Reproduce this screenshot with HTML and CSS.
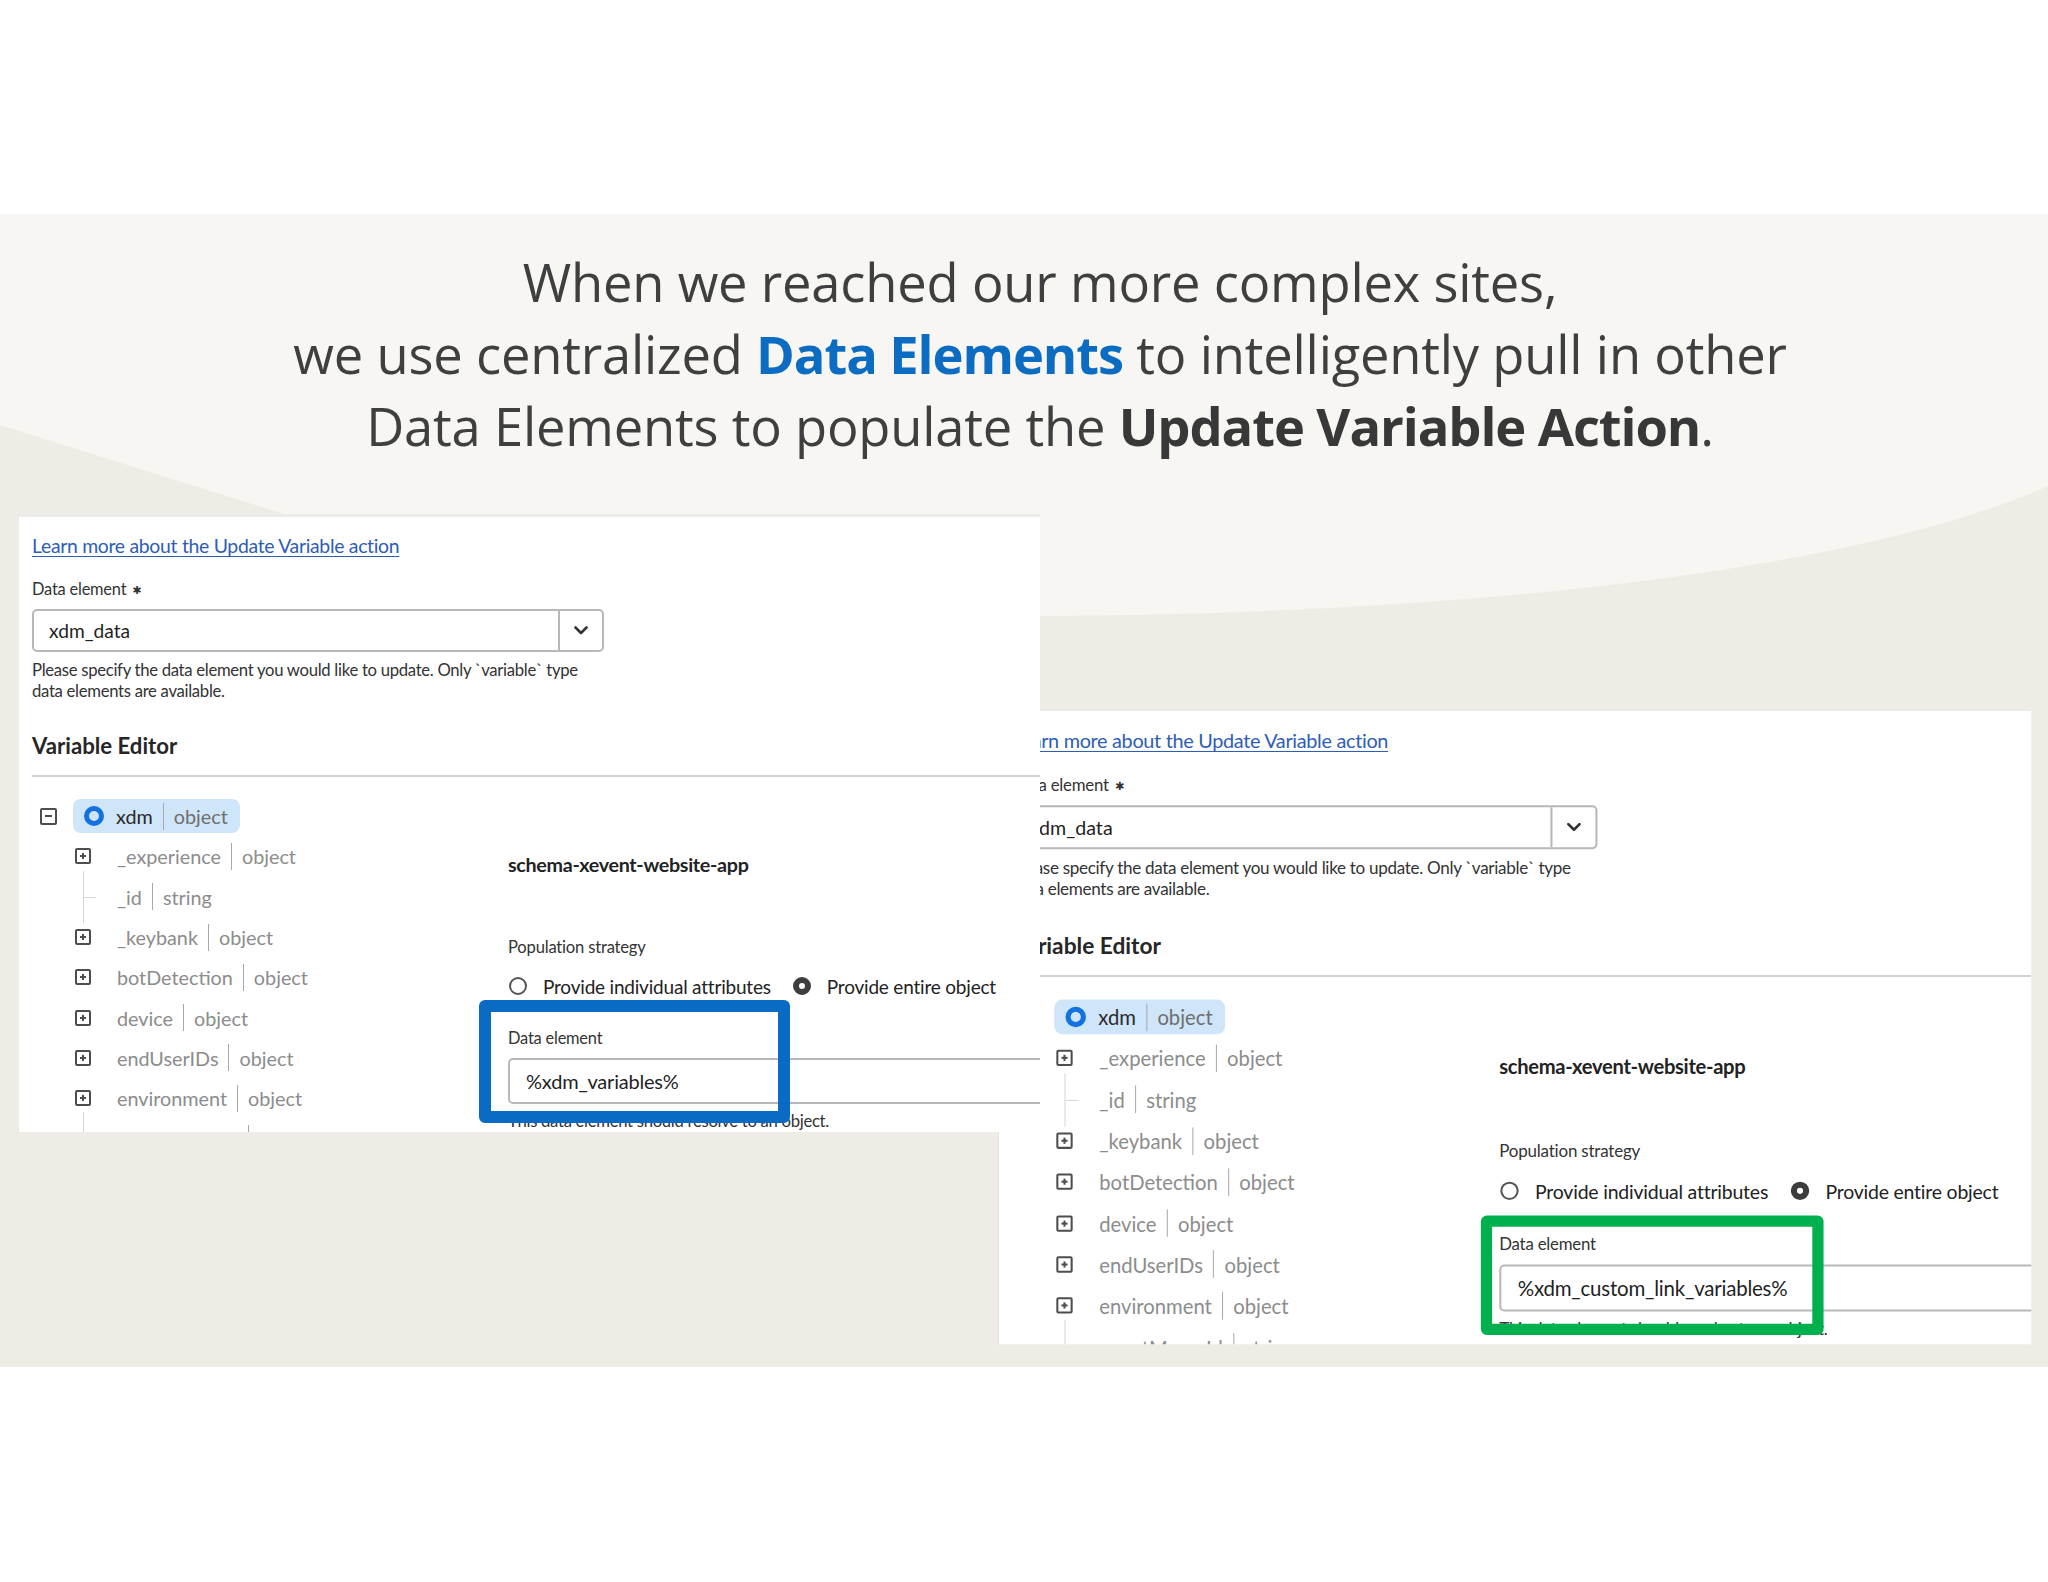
FILE: index.html
```html
<!DOCTYPE html>
<html lang="en">
<head>
<meta charset="utf-8">
<title>Update Variable Action</title>
<link rel="stylesheet" href="styles.css">
</head>
<body>
<div class="top"></div>
<section class="panel">
  <svg class="bg" viewBox="0 0 2048 1153" preserveAspectRatio="none" aria-hidden="true">
    <path d="M0 211 L300 305 L1040 402 C1450 400 1850 360 2048 272 L2048 1153 L0 1153 Z" fill="#efece5"/>
  </svg>
  <h1 class="title">When we reached our more complex sites,<br>we use centralized <b class="blue">Data Elements</b> to intelligently pull in other<br>Data Elements to populate the <b>Update Variable Action</b>.</h1>

  <div class="shot shot-right">
    <a class="learn">Learn more about the Update Variable action</a>
    <div class="lbl">Data element <span class="req">✱</span></div>
    <div class="select"><span class="val">xdm_data</span><span class="chev"><svg width="14" height="9" viewBox="0 0 14 9"><path d="M1.5 1.5 L7 7 L12.5 1.5" fill="none" stroke="#333" stroke-width="2.6" stroke-linecap="round" stroke-linejoin="round"/></svg></span></div>
    <p class="help">Please specify the data element you would like to update. Only `variable` type<br>data elements are available.</p>
    <h3 class="ve">Variable Editor</h3>
    <div class="rule"></div>
    <div class="editor">
      <div class="tree">
        <div class="row root"><span class="box minus"></span><span class="pill"><span class="ring"></span><span class="nm">xdm</span><span class="sep"></span><span class="tp">object</span></span></div>
        <div class="row child"><span class="box plus"></span><span class="nm">_experience</span><span class="sep"></span><span class="tp">object</span></div>
        <div class="row child leaf"><span class="conn"></span><span class="nm">_id</span><span class="sep"></span><span class="tp">string</span></div>
        <div class="row child"><span class="box plus"></span><span class="nm">_keybank</span><span class="sep"></span><span class="tp">object</span></div>
        <div class="row child"><span class="box plus"></span><span class="nm">botDetection</span><span class="sep"></span><span class="tp">object</span></div>
        <div class="row child"><span class="box plus"></span><span class="nm">device</span><span class="sep"></span><span class="tp">object</span></div>
        <div class="row child"><span class="box plus"></span><span class="nm">endUserIDs</span><span class="sep"></span><span class="tp">object</span></div>
        <div class="row child"><span class="box plus"></span><span class="nm">environment</span><span class="sep"></span><span class="tp">object</span></div>
        <div class="row child leaf"><span class="conn"></span><span class="nm">eventMergeId</span><span class="sep"></span><span class="tp">string</span></div>
      </div>
      <div class="detail">
        <div class="schema">schema-xevent-website-app</div>
        <div class="pop">Population strategy</div>
        <div class="radios"><span class="radio"></span><span class="rlabel">Provide individual attributes</span><span class="radio on"></span><span class="rlabel">Provide entire object</span></div>
        <div class="dlabel">Data element</div>
        <div class="input">%xdm_custom_link_variables%</div>
        <div class="dhelp">This data element should resolve to an object.</div>
        <div class="mark green"></div>
      </div>
    </div>
  </div>

  <div class="shot shot-left">
    <a class="learn">Learn more about the Update Variable action</a>
    <div class="lbl">Data element <span class="req">✱</span></div>
    <div class="select"><span class="val">xdm_data</span><span class="chev"><svg width="14" height="9" viewBox="0 0 14 9"><path d="M1.5 1.5 L7 7 L12.5 1.5" fill="none" stroke="#333" stroke-width="2.6" stroke-linecap="round" stroke-linejoin="round"/></svg></span></div>
    <p class="help">Please specify the data element you would like to update. Only `variable` type<br>data elements are available.</p>
    <h3 class="ve">Variable Editor</h3>
    <div class="rule"></div>
    <div class="editor">
      <div class="tree">
        <div class="row root"><span class="box minus"></span><span class="pill"><span class="ring"></span><span class="nm">xdm</span><span class="sep"></span><span class="tp">object</span></span></div>
        <div class="row child"><span class="box plus"></span><span class="nm">_experience</span><span class="sep"></span><span class="tp">object</span></div>
        <div class="row child leaf"><span class="conn"></span><span class="nm">_id</span><span class="sep"></span><span class="tp">string</span></div>
        <div class="row child"><span class="box plus"></span><span class="nm">_keybank</span><span class="sep"></span><span class="tp">object</span></div>
        <div class="row child"><span class="box plus"></span><span class="nm">botDetection</span><span class="sep"></span><span class="tp">object</span></div>
        <div class="row child"><span class="box plus"></span><span class="nm">device</span><span class="sep"></span><span class="tp">object</span></div>
        <div class="row child"><span class="box plus"></span><span class="nm">endUserIDs</span><span class="sep"></span><span class="tp">object</span></div>
        <div class="row child"><span class="box plus"></span><span class="nm">environment</span><span class="sep"></span><span class="tp">object</span></div>
        <div class="row child leaf"><span class="conn"></span><span class="nm">eventMergeId</span><span class="sep"></span><span class="tp">string</span></div>
      </div>
      <div class="detail">
        <div class="schema">schema-xevent-website-app</div>
        <div class="pop">Population strategy</div>
        <div class="radios"><span class="radio"></span><span class="rlabel">Provide individual attributes</span><span class="radio on"></span><span class="rlabel">Provide entire object</span></div>
        <div class="dlabel">Data element</div>
        <div class="input">%xdm_variables%</div>
        <div class="dhelp">This data element should resolve to an object.</div>
        <div class="mark blue-mark"></div>
      </div>
    </div>
  </div>
</section>
<div class="bottom"></div>
</body>
</html>
```

FILE: styles.css
```css
html, body {
  margin: 0;
  padding: 0;
  background: #ffffff;
}

body {
  font-family: "Open Sans", "Liberation Sans", sans-serif;
}

.top {
  height: 214px;
  background: #ffffff;
}

.panel {
  position: relative;
  height: 1153px;
  background: #f7f6f2;
  overflow: hidden;
}

.bottom {
  height: 215px;
  background: #ffffff;
}

.bg {
  position: absolute;
  left: 0;
  top: 0;
  width: 100%;
  height: 100%;
}

.title {
  position: relative;
  margin: 0;
  padding: 32px 0 0 32px;
  text-align: center;
  font-family: "Open Sans", sans-serif;
  font-weight: 400;
  font-size: 52.5px;
  line-height: 72px;
  color: #3f3f3f;
  letter-spacing: -0.2px;
}

.title b {
  font-weight: 700;
  color: #383838;
  letter-spacing: -1.1px;
}

.title b.blue {
  color: #0b6cc2;
}

/* ---------- screenshot windows ---------- */

.shot {
  position: absolute;
  box-sizing: border-box;
  background: #ffffff;
  overflow: hidden;
  padding: 17px 0 0 13px;
  font-family: "Lato", "Liberation Sans", sans-serif;
  color: #2c2c2c;
  border-top: 3px solid #ebebea;
}

.shot-left {
  left: 18px;
  top: 300px;
  width: 1022px;
  height: 618px;
  z-index: 2;
  border-left: 1px solid #e9e9e7;
}

.shot-right {
  left: 998px;
  top: 494px;
  width: 1010px;
  height: 622px;
  z-index: 1;
  transform: scale(1.023);
  transform-origin: 0 0;
  border-left: 1px solid #e2e2e0;
}

.learn {
  display: block;
  font-size: 19.4px;
  line-height: 24px;
  color: #2e5db5;
  text-decoration: underline;
  text-underline-offset: 3px;
  text-decoration-thickness: 1px;
  letter-spacing: -0.3px;
}

.lbl {
  margin-top: 21px;
  font-size: 16.4px;
  line-height: 20px;
  color: #333;
  letter-spacing: -0.2px;
}

.req {
  font-family: "DejaVu Sans", sans-serif;
  font-size: 11px;
  margin-left: 2px;
  vertical-align: 1px;
}

.select {
  margin-top: 8px;
  width: 572px;
  height: 43px;
  box-sizing: border-box;
  border: 2px solid #b8b8b8;
  border-radius: 5px;
  display: flex;
  align-items: center;
}

.select .val {
  flex: 1;
  padding-left: 15px;
  font-size: 19.2px;
  color: #1f1f1f;
}

.select .chev {
  width: 42px;
  height: 100%;
  border-left: 2px solid #b8b8b8;
  display: flex;
  align-items: center;
  justify-content: center;
}

.help {
  margin: 8px 0 0;
  font-size: 16.7px;
  line-height: 21px;
  color: #333;
  letter-spacing: -0.3px;
}

.ve {
  margin: 31px 0 0;
  font-size: 22.2px;
  line-height: 26px;
  font-weight: 700;
  color: #262626;
}

.rule {
  margin-top: 16px;
  height: 2px;
  background: #d2d2d2;
}

.editor {
  margin-top: 19px;
  display: grid;
  grid-template-columns: 476px 1fr;
}

/* ---------- tree ---------- */

.row {
  position: relative;
  height: 40.3px;
  display: flex;
  align-items: center;
  font-size: 19.8px;
  color: #8c8c8c;
}

.row.root {
  padding-left: 8px;
}

.row.child {
  padding-left: 43px;
}

.box {
  position: relative;
  width: 16px;
  height: 16px;
  box-sizing: border-box;
  border: 2px solid #4d4d4d;
  border-radius: 2px;
  flex: none;
}

.box::before {
  content: "";
  position: absolute;
  left: 3px;
  right: 3px;
  top: 5px;
  height: 2px;
  background: #4d4d4d;
}

.box.plus::after {
  content: "";
  position: absolute;
  top: 3px;
  bottom: 3px;
  left: 5px;
  width: 2px;
  background: #4d4d4d;
}

.row.root .box {
  width: 17px;
  height: 17px;
}

.row.child .box {
  margin-right: 26px;
}

.pill {
  margin-left: 16px;
  height: 34px;
  display: flex;
  align-items: center;
  padding: 0 12px 0 11px;
  background: #cfe5f9;
  border-radius: 8px;
}

.ring {
  width: 20px;
  height: 20px;
  box-sizing: border-box;
  border: 5px solid #1570e0;
  border-radius: 50%;
  margin-right: 12px;
}

.pill .nm {
  color: #2a2a2a;
}

.pill .tp {
  color: #6f6f6f;
}

.sep {
  width: 1px;
  height: 27px;
  background: #a9a9a9;
  margin: 0 10px 0 10px;
}

.leaf .conn {
  position: absolute;
  left: 51px;
  top: -6px;
  bottom: -6px;
  width: 12px;
  border-left: 1.5px solid #d6d6d6;
}

.leaf .conn::after {
  content: "";
  position: absolute;
  left: 0;
  top: 50%;
  width: 12px;
  height: 1.5px;
  background: #d6d6d6;
}

.leaf .nm {
  margin-left: 42px;
}

/* ---------- detail column ---------- */

.detail {
  position: relative;
}

.schema {
  margin-top: 57px;
  font-size: 19.7px;
  line-height: 24px;
  font-weight: 700;
  color: #222;
  letter-spacing: -0.3px;
}

.pop {
  margin-top: 60px;
  font-size: 16.6px;
  line-height: 20px;
  color: #333;
  letter-spacing: -0.2px;
}

.radios {
  margin-top: 17px;
  height: 24px;
  display: flex;
  align-items: center;
  font-size: 19px;
  color: #222;
  letter-spacing: -0.2px;
}

.radio {
  width: 18px;
  height: 18px;
  box-sizing: border-box;
  border: 2px solid #555;
  border-radius: 50%;
  margin-left: 1px;
  margin-right: 16px;
  flex: none;
}

.radio.on {
  border: 6px solid #3d3d3d;
  margin-left: 22px;
}

.dlabel {
  margin-top: 30px;
  font-size: 16.4px;
  line-height: 20px;
  color: #333;
  letter-spacing: -0.2px;
}

.input {
  margin-top: 10px;
  width: calc(100% + 20px);
  height: 46px;
  box-sizing: border-box;
  border: 2px solid #b8b8b8;
  border-radius: 5px;
  padding-left: 16px;
  display: flex;
  align-items: center;
  font-size: 20px;
  color: #1f1f1f;
  letter-spacing: -0.2px;
}

.dhelp {
  margin-top: 7px;
  font-size: 16.7px;
  line-height: 20px;
  color: #333;
  letter-spacing: -0.3px;
}

.mark {
  position: absolute;
  box-sizing: border-box;
  border-radius: 6px;
}

.blue-mark {
  left: -29px;
  top: 204px;
  width: 311px;
  height: 123px;
  border: 12px solid #0a6bc4;
}

.green {
  left: -18px;
  top: 214px;
  width: 335px;
  height: 117px;
  border: 11px solid #00b04f;
}
```
